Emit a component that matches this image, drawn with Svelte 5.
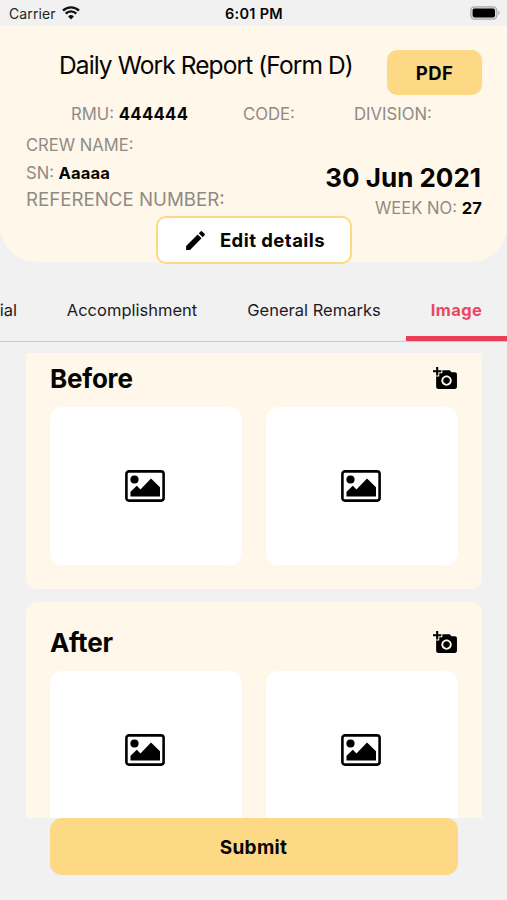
<script>
  let activeTab = "Image";

  const tabs = [
    { name: "Material", width: 42 },
    { name: "Accomplishment", width: 180 },
    { name: "General Remarks", width: 184 },
    { name: "Image", width: 101 },
  ];

  const sections = ["Before", "After"];
</script>

<div class="screen">
  <div class="status">
    <div class="carrier">
      <span>Carrier</span>
      <svg width="18" height="14" viewBox="0 0 18 14">
        <path d="M1 4.7a11.4 11.4 0 0 1 16 0" />
        <path d="M3.7 7.6a7.5 7.5 0 0 1 10.6 0" />
        <path class="fill" d="M9 13.4 6.1 10.4a4.1 4.1 0 0 1 5.8 0z" />
      </svg>
    </div>
    <span class="time">6:01 PM</span>
    <svg class="battery" width="31" height="14" viewBox="0 0 31 14">
      <rect x="0.8" y="0.8" width="26" height="12.4" rx="3.6" fill="#ddd" stroke="#aaa" stroke-width="1.2" />
      <rect x="2.6" y="2.6" width="22.4" height="8.8" rx="1.8" />
      <path d="M28.4 4.6q2.6 2.4 0 4.8z" fill="#aaa" />
    </svg>
  </div>

  <header>
    <div class="title-row">
      <h1>Daily Work Report (Form D)</h1>
      <button class="pdf">PDF</button>
    </div>

    <div class="codes">
      <span class="rmu">RMU: <b>444444</b></span>
      <span class="code">CODE:</span>
      <span class="division">DIVISION:</span>
    </div>

    <div class="details">
      <div class="crew">
        <p class="name">CREW NAME:</p>
        <p class="sn">SN: <b>Aaaaa</b></p>
        <p class="reference">REFERENCE NUMBER:</p>
      </div>
      <div class="date">
        <h2>30 Jun 2021</h2>
        <p>WEEK NO: <b>27</b></p>
      </div>
    </div>

    <button class="edit">
      <svg width="25" height="25" viewBox="0 0 24 24">
        <path
          d="M3 17.25V21h3.75L17.81 9.94l-3.75-3.75L3 17.25zM20.71 7.04a1 1 0 0 0 0-1.41l-2.34-2.34a1 1 0 0 0-1.41 0l-1.83 1.83 3.75 3.75 1.83-1.83z"
        />
      </svg>
      <span>Edit details</span>
    </button>
  </header>

  <nav>
    {#each tabs as tab}
      <button
        class="tab"
        class:active={activeTab === tab.name}
        style="width: {tab.width}px"
        on:click={() => (activeTab = tab.name)}
      >
        <span>{tab.name}</span>
      </button>
    {/each}
  </nav>

  <main>
    <div class="list">
      {#each sections as section}
        <section>
          <div class="section-head">
            <h3>{section}</h3>
            <svg width="25" height="25" viewBox="0 0 24 24">
              <path
                fill-rule="evenodd"
                d="M3 4V1h2v3h3v2H5v3H3V6H0V4h3zm3 6V7h3V4h7l1.83 2H21c1.1 0 2 .9 2 2v12c0 1.1-.9 2-2 2H5c-1.1 0-2-.9-2-2V10h3zm7 9c2.76 0 5-2.24 5-5s-2.24-5-5-5-5 2.24-5 5 2.24 5 5 5zm-3.2-5c0 1.77 1.43 3.2 3.2 3.2s3.2-1.43 3.2-3.2-1.43-3.2-3.2-3.2-3.2 1.43-3.2 3.2z"
              />
            </svg>
          </div>
          <div class="photos">
            {#each [1, 2] as photo}
              <div class="photo">
                <svg width="40" height="32" viewBox="0 0 40 32">
                  <rect x="1.4" y="1.4" width="37.2" height="29.2" rx="2.5" fill="none" stroke="#000" stroke-width="2.6" />
                  <circle cx="9.5" cy="9.5" r="4.1" />
                  <path d="M5.5 26.5v-4.8l6.3-6 3.7 3.8L26 8.5l9 8.8v9.2z" />
                </svg>
              </div>
            {/each}
          </div>
        </section>
      {/each}
    </div>
  </main>

  <button class="submit">Submit</button>
</div>

<style>
  :global(body) {
    margin: 0;
    background: #f1f1f1;
  }

  .screen {
    width: 507px;
    height: 900px;
    overflow: hidden;
    display: flex;
    flex-direction: column;
    background: #f1f1f1;
    color: #050505;
    font-family: Inter, "Liberation Sans", sans-serif;
  }

  h1,
  h2,
  h3,
  p {
    margin: 0;
  }

  button {
    margin: 0;
    padding: 0;
    border: 0;
    color: #050505;
    font-family: inherit;
    cursor: pointer;
  }

  b {
    color: #050505;
    font-weight: 700;
    letter-spacing: 0.1px;
  }

  .status {
    flex: none;
    height: 26px;
    padding: 0 6px 0 9px;
    box-sizing: border-box;
    display: grid;
    grid-template-columns: 1fr auto 1fr;
    align-items: center;
    font-size: 14px;
  }

  .carrier {
    display: flex;
    align-items: center;
    gap: 6px;
    color: #222;
    letter-spacing: 0.1px;
  }

  .carrier path {
    fill: none;
    stroke: #111;
    stroke-width: 2.4;
  }

  .carrier .fill {
    fill: #111;
    stroke: none;
  }

  .time {
    margin-right: 2px;
    font-size: 14.5px;
    font-weight: 600;
    letter-spacing: 0.3px;
  }

  .battery {
    justify-self: end;
  }

  header {
    flex: none;
    height: 236px;
    padding: 24px 25px 0 26px;
    box-sizing: border-box;
    display: flex;
    flex-direction: column;
    background: #fff7ea;
    border-radius: 0 0 36px 36px;
  }

  .title-row {
    flex: none;
    height: 47px;
    display: flex;
    justify-content: space-between;
  }

  h1 {
    margin-left: 33px;
    font-size: 24.5px;
    font-weight: 400;
    letter-spacing: -0.9px;
    line-height: 30px;
    white-space: nowrap;
  }

  .pdf {
    width: 95px;
    height: 45px;
    border-radius: 10px;
    background: #fed985;
    font-size: 18.5px;
    font-weight: 700;
    letter-spacing: 0.5px;
  }

  .codes {
    flex: none;
    height: 33px;
    display: flex;
    align-items: center;
    color: #8f8b84;
    font-size: 16.7px;
  }

  .rmu {
    width: 172px;
    margin-left: 45px;
  }

  .rmu b {
    letter-spacing: 0.3px;
  }

  .code {
    width: 111px;
  }

  /* the edit button below hangs over the bottom edge of the header */
  .details {
    flex: none;
    height: 86px;
    padding-top: 1px;
    box-sizing: border-box;
    display: flex;
    justify-content: space-between;
    color: #8f8b84;
    font-size: 16.6px;
  }

  .name {
    line-height: 29px;
  }

  .sn {
    line-height: 27px;
  }

  .reference {
    font-size: 18.7px;
    line-height: 26px;
  }

  .date {
    padding-top: 28px;
    text-align: right;
  }

  h2 {
    margin-right: 1px;
    color: #050505;
    font-size: 26px;
    font-weight: 700;
    line-height: 37px;
  }

  .date p {
    line-height: 24px;
  }

  .edit {
    align-self: center;
    flex: none;
    width: 196px;
    height: 48px;
    border: 2px solid #fed985;
    border-radius: 10px;
    box-sizing: border-box;
    display: flex;
    align-items: center;
    justify-content: center;
    gap: 12px;
    background: #fff;
    font-size: 18.5px;
    font-weight: 700;
    letter-spacing: 0.45px;
  }

  nav {
    flex: none;
    height: 80px;
    padding-top: 18px;
    box-sizing: border-box;
    border-bottom: 1px solid #ccc;
    display: flex;
  }

  .tab {
    flex: none;
    height: 61px;
    padding-top: 4px;
    box-sizing: border-box;
    border-bottom: 5px solid transparent;
    display: flex;
    align-items: center;
    justify-content: center;
    background: none;
    color: #1c1c1e;
    font-size: 16.5px;
    white-space: nowrap;
  }

  .tab:first-child {
    padding-right: 25px;
    justify-content: flex-end;
  }

  .tab.active {
    border-bottom-color: #eb3d56;
    color: #eb4762;
    font-weight: 700;
    letter-spacing: 0.4px;
  }

  main {
    flex: none;
    height: 465px;
    margin-top: 11px;
    padding: 0 25px 0 26px;
    overflow: hidden;
  }

  /* list is scrolled down a little */
  .list {
    margin-top: -15px;
    display: flex;
    flex-direction: column;
    gap: 13px;
  }

  section {
    height: 251px;
    padding: 20px 24px 24px;
    box-sizing: border-box;
    border-radius: 10px;
    background: #fff7ea;
  }

  .section-head {
    height: 49px;
    display: flex;
    justify-content: space-between;
  }

  .section-head svg {
    margin-top: 8px;
  }

  h3 {
    font-size: 26px;
    font-weight: 700;
    letter-spacing: -0.2px;
    line-height: 42px;
  }

  .photos {
    display: grid;
    grid-template-columns: 1fr 1fr;
    gap: 24px;
  }

  .photo {
    height: 158px;
    padding-right: 2px;
    box-sizing: border-box;
    border-radius: 12px;
    display: flex;
    align-items: center;
    justify-content: center;
    background: #fff;
  }

  .submit {
    flex: none;
    align-self: center;
    width: 408px;
    height: 57px;
    padding-top: 2px;
    border-radius: 12px;
    background: #fed985;
    font-size: 19px;
    font-weight: 700;
    letter-spacing: 0.3px;
  }
</style>
